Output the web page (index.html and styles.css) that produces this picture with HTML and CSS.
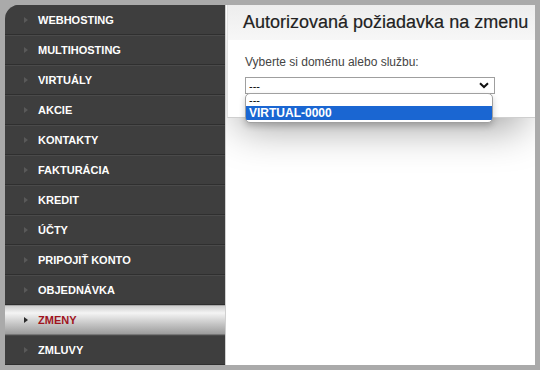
FILE: index.html
```html
<!DOCTYPE html>
<html lang="sk">
<head>
<meta charset="utf-8">
<link rel="stylesheet" href="styles.css">
</head>
<body>
<div class="frame">
  <nav class="sidebar">
    <a class="item"><span class="arrow"></span>WEBHOSTING</a>
    <a class="item"><span class="arrow"></span>MULTIHOSTING</a>
    <a class="item"><span class="arrow"></span>VIRTUÁLY</a>
    <a class="item"><span class="arrow"></span>AKCIE</a>
    <a class="item"><span class="arrow"></span>KONTAKTY</a>
    <a class="item"><span class="arrow"></span>FAKTURÁCIA</a>
    <a class="item"><span class="arrow"></span>KREDIT</a>
    <a class="item"><span class="arrow"></span>ÚČTY</a>
    <a class="item"><span class="arrow"></span>PRIPOJIŤ KONTO</a>
    <a class="item"><span class="arrow"></span>OBJEDNÁVKA</a>
    <a class="item active"><span class="arrow"></span>ZMENY</a>
    <a class="item"><span class="arrow"></span>ZMLUVY</a>
  </nav>
  <main class="content">
    <section class="panel">
      <header class="panel-head"><h1>Autorizovaná požiadavka na zmenu</h1></header>
      <div class="panel-body">
        <label class="label">Vyberte si doménu alebo službu:</label>
        <div class="select">
          <span>---</span>
          <svg class="chev" width="10" height="7" viewBox="0 0 10 7"><path d="M1 1.2 L5 5 L9 1.2" fill="none" stroke="#111" stroke-width="2"/></svg>
        </div>
      </div>
    </section>
    <ul class="dropdown">
      <li class="opt">---</li>
      <li class="opt sel">VIRTUAL-0000</li>
    </ul>
  </main>
</div>
</body>
</html>
```
FILE: styles.css
```css
html, body { margin: 0; padding: 0; }
body {
  background: #aaaaaa;
  padding: 5px;
  width: 540px;
  height: 370px;
  box-sizing: border-box;
  font-family: "Liberation Sans", Arial, sans-serif;
  overflow: hidden;
}
.frame {
  display: flex;
  width: 530px;
  height: 360px;
}
.sidebar {
  width: 220px;
  flex: none;
  background: #3e3e3e;
  border-top-left-radius: 14px;
  overflow: hidden;
  display: flex;
  flex-direction: column;
}
.item {
  height: 28px;
  border-top: 1px solid #4a4a4a;
  border-bottom: 1px solid #2f2f2f;
  display: flex;
  align-items: center;
  padding-left: 19px;
  color: #ffffff;
  font-weight: bold;
  font-size: 11px;
}
.item:first-child { border-top-color: #3e3e3e; }
.arrow {
  width: 0; height: 0;
  border-top: 3px solid transparent;
  border-bottom: 3px solid transparent;
  border-left: 4px solid #595959;
  margin-right: 10px;
}
.item.active {
  background: linear-gradient(to bottom, #cfcfcf 0%, #f4f4f4 25%, #c4c4c4 65%, #9c9c9c 100%);
  border-top-color: #aaa;
  border-bottom-color: #777;
  color: #a0141e;
}
.item.active .arrow { border-left-color: #2a2a2a; }
.content {
  flex: 1;
  position: relative;
  background: #ffffff;
  border-left: 1px solid #d0d0d0;
  padding-left: 1px;
  overflow: hidden;
}
.panel {
  height: 112px;
  border-left: 1px solid #e2e2e2;
  border-bottom: 1px solid #cfcfcf;
  box-shadow: 0 22px 40px -12px rgba(0,0,0,0.38);
  background: #fff;
  position: relative;
}
.panel-head {
  height: 35px;
  background: linear-gradient(to bottom, #ededed, #f7f7f7);
  display: flex;
  align-items: center;
  padding-left: 15px;
}
.panel-head h1 {
  margin: 0;
  font-size: 18px;
  font-weight: normal;
  color: #222;
  white-space: nowrap;
  -webkit-text-stroke: 0.2px #222;
}
.panel-body {
  padding: 15px 0 0 17px;
}
.label {
  display: block;
  font-size: 12px;
  color: #444;
  line-height: 14px;
}
.select {
  margin-top: 8px;
  width: 243px;
  height: 15px;
  border: 1px solid #9f9f9f;
  display: flex;
  align-items: center;
  justify-content: space-between;
  padding: 0 2px 0 3px;
  box-sizing: content-box;
  font-size: 11px;
  color: #000;
}
.chev { margin-right: 3px; }
.dropdown {
  position: absolute;
  left: 19px;
  top: 88px;
  width: 246px;
  margin: 0;
  padding: 0 0 2px 0;
  list-style: none;
  background: #fff;
  border: 1px solid #a0a0a0;
  border-radius: 5px;
  overflow: hidden;
  box-shadow: 0 3px 6px rgba(0,0,0,0.2);
}
.opt {
  height: 12px;
  line-height: 12px;
  padding-left: 3px;
  font-size: 11px;
  color: #000;
}
.opt.sel {
  height: 14px;
  line-height: 14px;
  background: #1a66d2;
  color: #fff;
  font-weight: bold;
  font-size: 12px;
}
```
